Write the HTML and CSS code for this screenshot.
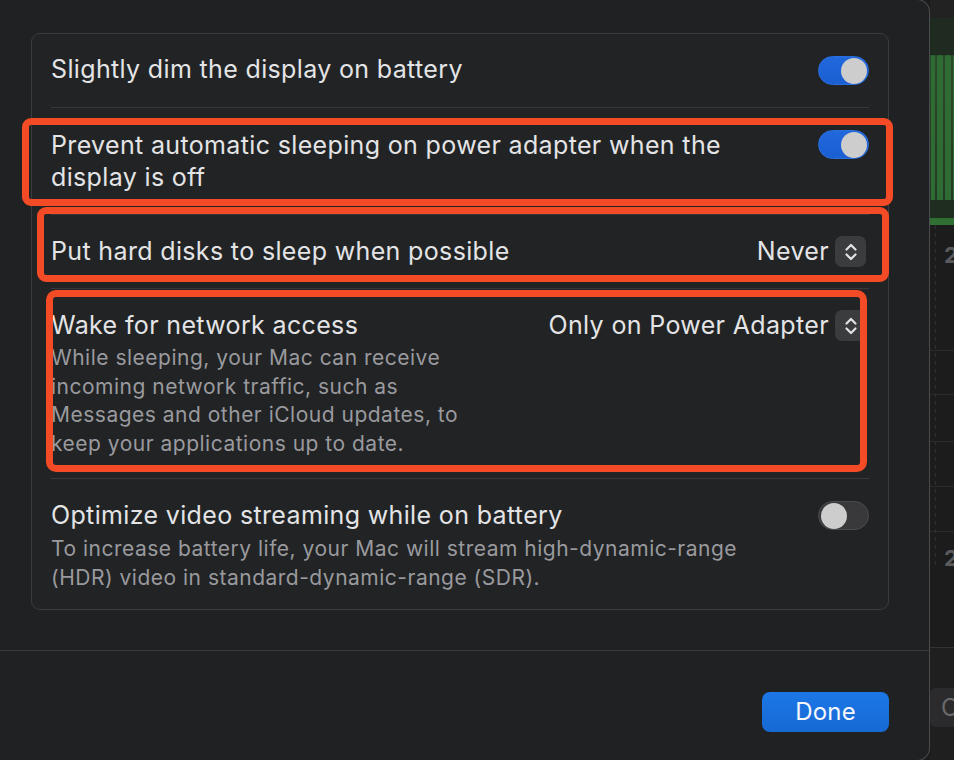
FILE: index.html
```html
<!DOCTYPE html>
<html lang="en">
<head>
<meta charset="utf-8">
<title>Battery Options</title>
<link rel="stylesheet" href="styles.css">
</head>
<body>
<div class="screen">
  <div class="sheet">
    <div class="sheet-body">
      <div class="card">
        <div class="row row-first">
          <div class="text"><div class="title">Slightly dim the display on battery</div></div>
          <span class="toggle on"><span class="knob"></span></span>
        </div>
        <div class="row row-2">
          <div class="text"><div class="title">Prevent automatic sleeping on power adapter when the display is off</div></div>
          <span class="toggle on"><span class="knob"></span></span>
        </div>
        <div class="row row-3 row-center">
          <div class="text"><div class="title">Put hard disks to sleep when possible</div></div>
          <div class="popup">
            <span class="popup-value">Never</span>
            <span class="stepper"><svg width="14" height="22" viewBox="0 0 14 22"><path d="M2.5 8.5 L7 4 L11.5 8.5 M2.5 13.5 L7 18 L11.5 13.5" fill="none" stroke="#e2e2e4" stroke-width="2.2" stroke-linecap="round" stroke-linejoin="round"/></svg></span>
          </div>
        </div>
        <div class="row row-4">
          <div class="text narrow">
            <div class="title">Wake for network access</div>
            <div class="desc">While sleeping, your Mac can receive incoming network traffic, such as Messages and other iCloud updates, to keep your applications up to date.</div>
          </div>
          <div class="popup">
            <span class="popup-value">Only on Power Adapter</span>
            <span class="stepper"><svg width="14" height="22" viewBox="0 0 14 22"><path d="M2.5 8.5 L7 4 L11.5 8.5 M2.5 13.5 L7 18 L11.5 13.5" fill="none" stroke="#e2e2e4" stroke-width="2.2" stroke-linecap="round" stroke-linejoin="round"/></svg></span>
          </div>
        </div>
        <div class="row row-5">
          <div class="text">
            <div class="title">Optimize video streaming while on battery</div>
            <div class="desc">To increase battery life, your Mac will stream high-dynamic-range (HDR) video in standard-dynamic-range (SDR).</div>
          </div>
          <span class="toggle off"><span class="knob"></span></span>
        </div>

        <div class="mark mark-1"></div>
        <div class="mark mark-2"></div>
        <div class="mark mark-3"></div>
      </div>
    </div>
    <div class="sheet-footer">
      <button class="btn-done" type="button">Done</button>
    </div>
  </div>

  <div class="side">
    <div class="side-top"></div>
    <div class="chart">
      <div class="chart-head"></div>
      <div class="bars">
        <span class="bar b1"></span>
        <span class="bar b2"></span>
        <span class="bar b2"></span>
        <span class="bar b3"></span>
      </div>
      <div class="chart-foot"></div>
      <div class="chart-line"></div>
    </div>
    <div class="grid">
      <div class="seg seg-a"><span class="axis">2</span></div>
      <div class="seg seg-b"></div>
      <div class="seg seg-c"></div>
      <div class="seg seg-d"></div>
      <div class="seg seg-e"></div>
      <div class="seg seg-f"><span class="axis">2</span></div>
    </div>
    <div class="side-bottom">
      <span class="side-btn">C</span>
    </div>
  </div>
</div>
</body>
</html>
```

FILE: styles.css
```css
* { box-sizing: border-box; }

html, body {
  margin: 0;
  padding: 0;
}

body {
  width: 954px;
  height: 760px;
  overflow: hidden;
  background: #1c1c1d;
  font-family: Inter, "Noto Sans", "Liberation Sans", sans-serif;
  -webkit-font-smoothing: antialiased;
}

.screen {
  display: flex;
  height: 760px;
}

/* ---------- sheet ---------- */
.sheet {
  flex: none;
  width: 930px;
  height: 762px;
  margin-top: -1px;
  background: #1f2123;
  border: 1px solid #4a4b4d;
  border-left: none;
  border-radius: 0 13px 13px 0;
  display: flex;
  flex-direction: column;
}

.sheet-body {
  padding: 33px 40px 40px 31px;
}

.card {
  position: relative;
  background: #212325;
  border: 1px solid #3b3c3e;
  border-radius: 9px;
  padding: 0 19px;
}

.row {
  display: flex;
  justify-content: space-between;
  align-items: flex-start;
  gap: 20px;
  padding: 21px 0;
  border-top: 1px solid #37383a;
}

.row-first { border-top: none; padding-top: 20px; padding-bottom: 22px; }
.row-center { align-items: center; }
.row-2 { padding-bottom: 21px; }
.row-3 { padding-bottom: 21px; }
.row-4 { padding-bottom: 20px; }
.row-5 { padding-bottom: 17px; }

.text {
  max-width: 720px;
}

.text.narrow {
  max-width: 432px;
}

.title {
  color: #e4e4e6;
  font-size: 25px;
  letter-spacing: 0.35px;
  line-height: 31px;
}

.row-2 .title { line-height: 32px; }

.desc {
  margin-top: 3px;
  color: #9a9a9e;
  font-size: 21px;
  letter-spacing: 0.5px;
  line-height: 28.5px;
}

.row-5 .desc { margin-top: 4px; }

/* ---------- toggle ---------- */
.toggle {
  flex: none;
  display: flex;
  align-items: center;
  width: 51px;
  height: 29px;
  padding: 0 1.5px;
  border-radius: 15px;
  margin-top: 1px;
}

.row-first .toggle { margin-top: 2px; }

.toggle.on {
  justify-content: flex-end;
  background: linear-gradient(#2168dc, #1b5fd2);
  border: 1px solid #2a6fe0;
}

.toggle.off {
  justify-content: flex-start;
  background: #39393b;
  border: 1px solid #4b4b4e;
}

.knob {
  width: 26px;
  height: 26px;
  border-radius: 50%;
  background: #cdcdcd;
}

/* ---------- popup ---------- */
.popup {
  flex: none;
  display: flex;
  align-items: center;
  gap: 6px;
}

.popup-value {
  color: #e4e4e6;
  font-size: 25px;
  letter-spacing: 0.35px;
  line-height: 31px;
}

.stepper {
  width: 31px;
  height: 31px;
  border-radius: 7px;
  background: #3b3c3e;
  display: flex;
  align-items: center;
  justify-content: center;
  margin-right: 3px;
}

/* ---------- annotation marks ---------- */
.mark {
  position: absolute;
  border: 7px solid #f24b25;
  border-radius: 9px;
  pointer-events: none;
}

.mark-1 { left: -10px; top: 84px; width: 871px; height: 88px; }
.mark-2 { left: 5px; top: 173px; width: 852px; height: 75px; }
.mark-3 { left: 14px; top: 256px; width: 821px; height: 182px; border-radius: 10px; }

/* ---------- footer ---------- */
.sheet-footer {
  border-top: 1px solid #38393b;
  padding: 41px 40px 0 0;
  display: flex;
  justify-content: flex-end;
}

.btn-done {
  width: 127px;
  height: 40px;
  border: none;
  border-radius: 8px;
  background: linear-gradient(#1c77e6, #1769d4);
  color: #f4f7fc;
  font-family: Inter, "Noto Sans", sans-serif;
  font-size: 24px;
  letter-spacing: 0.2px;
  padding: 0 0 2px;
}

/* ---------- right side (background window) ---------- */
.side {
  flex: 1;
  display: flex;
  flex-direction: column;
  background: #1c1c1c;
}

.side-top {
  height: 18px;
  background: #222223;
}

.chart {
  height: 207px;
  display: flex;
  flex-direction: column;
  background: #1f2b21;
}

.chart-head { height: 37px; }

.bars {
  height: 145px;
  display: flex;
  gap: 2px;
  padding-left: 1px;
  background: linear-gradient(#2a4a2c, #223a25);
}

.bar {
  background: #2e6c33;
  border-radius: 3px 3px 0 0;
}

.b1 { width: 4px; }
.b2 { width: 6px; }
.b3 { width: 6px; }

.chart-foot { height: 18px; background: #1f2d21; }

.chart-line { height: 7px; background: #2f6f34; }

.grid {
  height: 422px;
  display: flex;
  flex-direction: column;
  background:
    repeating-linear-gradient(to bottom, #303030 0 4px, transparent 4px 8px) no-repeat 5px 0 / 1px 342px,
    #1c1c1c;
}

.seg {
  border-bottom: 1px solid #2b2b2b;
  padding-left: 14px;
}

.seg-a { height: 126px; padding-top: 18px; }
.seg-b { height: 44px; }
.seg-c { height: 47px; }
.seg-d { height: 45px; }
.seg-e { height: 45px; }
.seg-f { flex: 1; border-bottom: none; padding-top: 14px; }

.axis {
  color: #5a5a5c;
  font-family: Inter, sans-serif;
  font-weight: 700;
  font-size: 22px;
  line-height: 24px;
}

.side-bottom {
  flex: 1;
  border-top: 1px solid #333335;
  background: #1f1f20;
  padding-top: 40px;
}

.side-btn {
  display: flex;
  align-items: center;
  height: 39px;
  padding-left: 11px;
  border-radius: 6px 0 0 6px;
  background: #2b2b2d;
  color: #6a6a6c;
  font-family: Inter, sans-serif;
  font-size: 24px;
}
```
